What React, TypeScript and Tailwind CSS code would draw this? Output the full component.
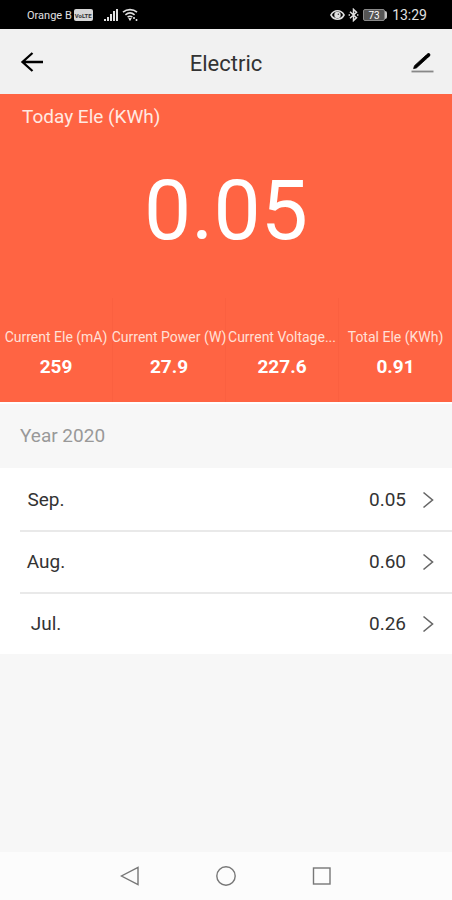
import React from 'react';

interface Stat {
  label: string;
  value: string;
}

interface MonthUsage {
  month: string;
  usage: string;
}

const STATS: Stat[] = [
  { label: 'Current Ele (mA)', value: '259' },
  { label: 'Current Power (W)', value: '27.9' },
  { label: 'Current Voltage...', value: '227.6' },
  { label: 'Total Ele (KWh)', value: '0.91' },
];

const MONTHS: MonthUsage[] = [
  { month: 'Sep.', usage: '0.05' },
  { month: 'Aug.', usage: '0.60' },
  { month: 'Jul.', usage: '0.26' },
];

function StatusBar() {
  return (
    <div className="flex h-[29px] items-center justify-between bg-black pl-[27px] pr-[25px] pt-px text-[#e0e0e0]">
      <div className="flex items-center">
        <span className="pt-[2px] text-[11px] leading-4">Orange B</span>
        <span className="ml-[2px] flex h-3 w-[19px] items-center justify-center rounded-[2px] bg-[#d6d6d6] text-[6px] font-bold text-[#333]">
          VoLTE
        </span>
        <svg className="ml-[10px]" width="16" height="14" viewBox="0 0 16 14" fill="currentColor" aria-hidden="true">
          <rect x="1" y="11" width="2" height="2" />
          <rect x="4" y="9" width="2" height="4" />
          <rect x="7" y="6" width="2" height="7" />
          <rect x="10" y="3" width="2" height="10" />
          <rect x="13" y="1" width="2" height="12" />
        </svg>
        <svg className="ml-[3px]" width="17" height="14" viewBox="0 0 17 14" fill="none" stroke="currentColor" strokeWidth="1.6" aria-hidden="true">
          <path d="M1 4.2C5 .8 11 .8 15 4.2" />
          <path d="M3.4 6.8C6.2 4.4 9.8 4.4 12.6 6.8" />
          <path d="M5.6 9.2C7.2 7.9 8.8 7.9 10.4 9.2" />
          <path d="M6.8 10.4h2.4L8 12.4z" fill="currentColor" strokeWidth="1" />
          <path d="M12 9v2M14.5 11v2" />
        </svg>
      </div>
      <div className="flex items-center">
        <svg width="15" height="12" viewBox="0 0 15 12" fill="none" stroke="currentColor" strokeWidth="1.6" aria-hidden="true">
          <path d="M1 6C4 .4 11 .4 14 6 11 11.6 4 11.6 1 6z" />
          <circle cx="7.5" cy="6" r="2.4" fill="currentColor" />
          <circle cx="8.3" cy="5.2" r=".6" fill="#000" stroke="none" />
        </svg>
        <svg className="ml-[3px]" width="11" height="14" viewBox="0 0 11 14" fill="none" stroke="currentColor" strokeWidth="1.5" aria-hidden="true">
          <path d="M2 3.8l6.5 6L5.5 12.6V1.4l3 2.8-6.5 6" />
          <path d="M.6 7h1.4M9 7h1.4" />
        </svg>
        <span className="ml-[4px] flex h-3 w-[22px] items-center justify-center rounded-[2px] border border-[#8a8a8a] bg-[#555] text-[10px] text-white">
          73
        </span>
        <span className="h-2 w-[2px] rounded-r-[2px] bg-[#c4c4c4]" />
        <span className="ml-[5px] text-[14px] leading-4">13:29</span>
      </div>
    </div>
  );
}

function Header() {
  return (
    <header className="flex h-[65px] items-center justify-between bg-[#f1f1f1] px-[18px] text-black">
      <button type="button" aria-label="Back" className="flex w-7 items-center">
        <svg width="28" height="24" viewBox="0 0 28 24" fill="none" stroke="currentColor" strokeWidth="2.3">
          <path d="M25 12H4.5M14.5 3L4.5 12l10 9" />
        </svg>
      </button>
      <h1 className="pt-[3px] text-[22px] text-[#333]">Electric</h1>
      <button type="button" aria-label="Edit" className="flex w-7 items-center justify-end">
        <svg width="24" height="24" viewBox="0 0 24 24" fill="none">
          <path d="M3.6 18.6l.9-2.9L15.6 5.6l2 2.2L6.4 17.9z" fill="currentColor" stroke="currentColor" strokeWidth=".8" />
          <path d="M17.2 6.2l1.4-1.3" stroke="currentColor" strokeWidth="3.6" strokeLinecap="round" />
          <path d="M1.5 21.5h22" stroke="#888" strokeWidth="1.8" />
        </svg>
      </button>
    </header>
  );
}

function Summary() {
  return (
    <section className="bg-[#ff6443] text-white">
      <h2 className="px-[22px] pt-[11px] text-[19px] leading-6 text-[#ffe9e2]">Today Ele (KWh)</h2>
      <p className="pt-[34px] text-center text-[84px] leading-[96px]">0.05</p>
      <dl className="mt-[39px] grid grid-cols-4">
        {STATS.map(stat => (
          <div key={stat.label} className="flex h-[104px] flex-col items-center border-r border-[#fb6040] pt-[29px] last:border-r-0">
            <dt className="whitespace-nowrap text-[14px] leading-5 text-[#ffe0d7]">{stat.label}</dt>
            <dd className="pt-[8px] text-[19px] font-bold leading-6">{stat.value}</dd>
          </div>
        ))}
      </dl>
    </section>
  );
}

function MonthRow({ month, usage }: MonthUsage) {
  return (
    <li className="group pl-5">
      <button
        type="button"
        className="flex h-[62px] w-full items-center border-t-2 border-[#e9e9e9] pr-[18px] text-[19px] text-[#333] group-first:border-white"
      >
        <span className="w-[52px] text-center">{month}</span>
        <span className="ml-auto">{usage}</span>
        <svg className="ml-[16px]" width="12" height="18" viewBox="0 0 12 18" fill="none" stroke="#666" strokeWidth="1.6" aria-hidden="true">
          <path d="M1.5 1.5L10.5 9l-9 7.5" />
        </svg>
      </button>
    </li>
  );
}

function NavBar() {
  return (
    <nav className="flex h-[48px] items-center justify-center gap-[76px] bg-[#fcfcfc] text-[#777]">
      <button type="button" aria-label="Back">
        <svg width="20" height="20" viewBox="0 0 20 20" fill="none" stroke="currentColor" strokeWidth="1.4">
          <path d="M18 1.5v17L1.5 10z" />
        </svg>
      </button>
      <button type="button" aria-label="Home">
        <svg width="20" height="20" viewBox="0 0 20 20" fill="none" stroke="currentColor" strokeWidth="1.4">
          <circle cx="10" cy="10" r="9.2" />
        </svg>
      </button>
      <button type="button" aria-label="Recent apps">
        <svg width="20" height="20" viewBox="0 0 20 20" fill="none" stroke="currentColor" strokeWidth="1.4">
          <rect x="1.5" y="2" width="16.5" height="16" />
        </svg>
      </button>
    </nav>
  );
}

export default function App() {
  return (
    <div className="flex min-h-screen flex-col bg-[#f7f7f7] font-[Roboto,sans-serif]">
      <StatusBar />
      <Header />
      <main className="flex-1">
        <Summary />
        <h2 className="flex h-[66px] items-center border-t-2 border-white px-5 text-[19px] text-[#999]">Year 2020</h2>
        <ul className="bg-white">
          {MONTHS.map(m => (
            <MonthRow key={m.month} month={m.month} usage={m.usage} />
          ))}
        </ul>
      </main>
      <NavBar />
    </div>
  );
}
